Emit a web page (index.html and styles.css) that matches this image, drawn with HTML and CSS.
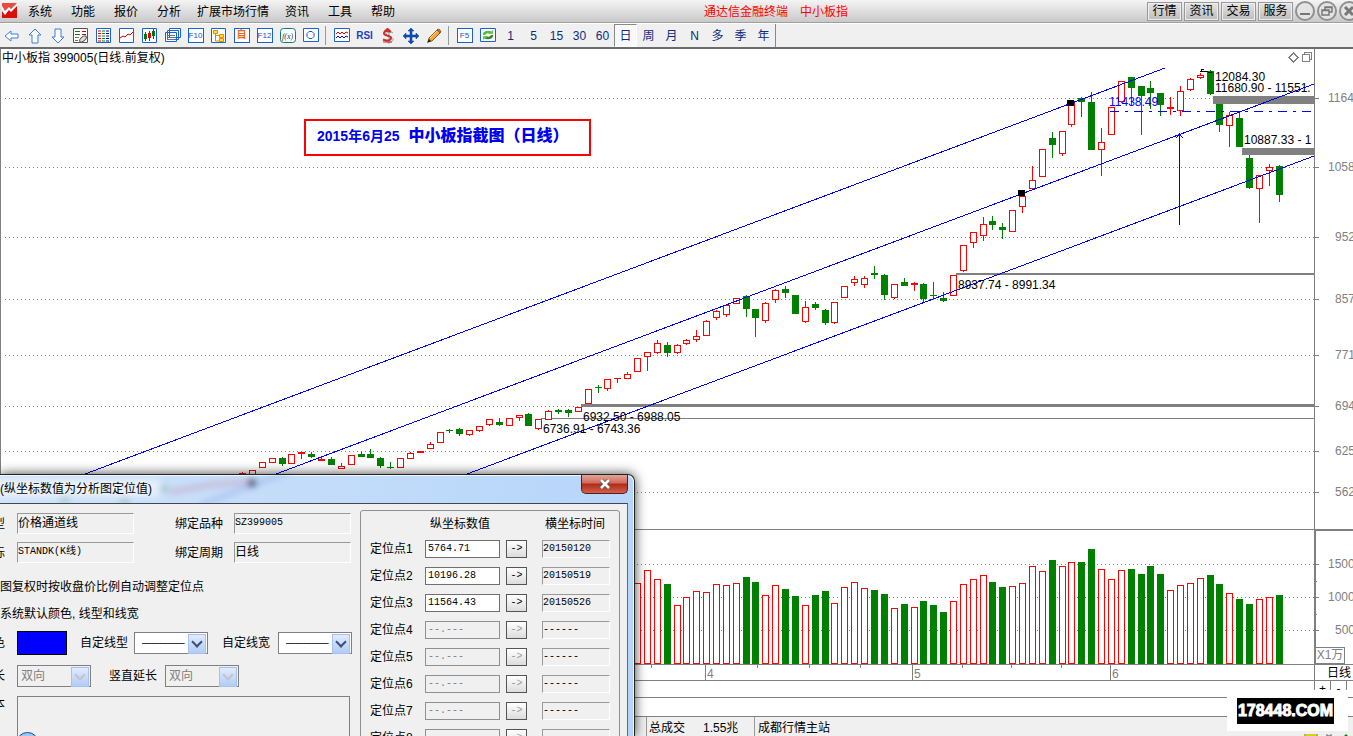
FILE: index.html
```html
<!DOCTYPE html>
<html lang="zh-CN">
<head>
<meta charset="utf-8">
<title>通达信金融终端 中小板指</title>
<link rel="stylesheet" href="styles.css">
</head>
<body>
<div class="app">
  <header class="menubar">
    <svg class="logo" viewBox="0 0 15 15"><rect width="15" height="15" fill="#d8100c"/><path d="M0 0h15L9 6 7 4 3 9 0 6z" fill="#e84a40"/><path d="M0 3l3 5 4-4 2 2 6-6v3l-6 6-2-2-4 5-3-4z" fill="#fff"/></svg>
    <nav class="menu">
      <button>系统</button><button>功能</button><button>报价</button><button>分析</button><button class="wide">扩展市场行情</button><button>资讯</button><button>工具</button><button>帮助</button>
    </nav>
    <div class="app-title"><span>通达信金融终端</span><span>中小板指</span></div>
    <div class="quick">
      <button>行情</button><button>资讯</button><button>交易</button><button>服务</button>
    </div>
    <div class="winctl">
      <button aria-label="最小化"><svg viewBox="0 0 20 20"><circle cx="10" cy="10" r="9"/><path d="M5 13h10" stroke-width="2"/></svg></button>
      <button aria-label="还原"><svg viewBox="0 0 20 20"><circle cx="10" cy="10" r="9"/><path d="M8 9V6h7v5h-3M5 9h7v5H5zM8 6.500h7M5 9.500h7" stroke-width="1.500"/></svg></button>
      <button aria-label="关闭"><svg viewBox="0 0 20 20"><circle cx="10" cy="10" r="9"/><path d="M6 6l8 8M14 6l-8 8" stroke-width="3"/></svg></button>
    </div>
  </header>

  <div class="toolbar">
    <button aria-label="后退"><svg viewBox="0 0 16 16"><path d="M1 8l6-5v3h7v4H7v3z" class="arrow"/></svg></button>
    <button aria-label="向上"><svg viewBox="0 0 16 16"><path d="M8 1l6 6h-3v8H5V7H2z" class="arrow"/></svg></button>
    <button aria-label="向下"><svg viewBox="0 0 16 16"><path d="M8 15l6-6h-3V1H5v8H2z" class="arrow"/></svg></button>
    <button aria-label="自选"><svg viewBox="0 0 16 16"><path d="M.5.500h14v14H.500z" fill="#fff" stroke="#555"/><path d="M2 3.500h5M2 6.500h5" stroke="#080"/><path d="M9 3.500h4M9 6.500h4" stroke="#c00"/><path d="M2 9.500h4M2 12.500h3" stroke="#777"/><ellipse cx="10" cy="11" rx="4" ry="2" transform="rotate(-40 10 11)" fill="#ddd" stroke="#555"/></svg></button>
    <button aria-label="行情列表"><svg viewBox="0 0 16 16"><path d="M.5.500h14v14H.500z" class="frame"/><path d="M2 3h3M2 5.500h3M2 8h3M2 10.500h3M2 13h3" stroke="#e00"/><path d="M6 3h3M6 5.500h3M6 8h3M6 10.500h3M6 13h3" stroke="#080"/><path d="M10 3h3M10 5.500h3M10 8h3M10 10.500h3M10 13h3" stroke="#00c"/></svg></button>
    <button aria-label="分时图"><svg viewBox="0 0 16 16"><path d="M.5.500h14v14H.500z" class="frame"/><path d="M1 10l3-2 2 1 3-3 2 1 3-3" fill="none" stroke="#d00"/></svg></button>
    <button aria-label="K线图"><svg viewBox="0 0 16 16"><path d="M.5.500h14v14H.500z" class="frame"/><path d="M2 6h3v5H2zM3 4h1v9H3z" fill="#070"/><path d="M6 5h3v5H6zM7 3h1v10H7z" fill="#d00"/><path d="M10 3h3v5h-3zM11 1h1v10h-1z" fill="#070"/></svg></button>
    <button aria-label="多窗口"><svg viewBox="0 0 16 16"><path d="M4.500.500h11v9h-11zM2.500 2.500h11v9h-11zM.5 4.500h11v9H.500z" class="frame"/><path d="M2 7.500h8M2 9.500h8M2 11.500h8" stroke="#678"/></svg></button>
    <button aria-label="F10"><span class="key">F10</span></button>
    <button aria-label="板块树"><svg viewBox="0 0 16 16"><path d="M.5.500h14v14H.500z" class="frame"/><path d="M4.500 5v8h4M4.500 7.500h4" fill="none" stroke="#e68a00"/><path d="M2.500 2.500h4v3h-4zM8.500 6.500h4v3h-4zM8.500 10.500h4v3h-4z" fill="#ffe14a" stroke="#e68a00"/></svg></button>
    <button aria-label="自选股"><span class="key orange">自</span></button>
    <button aria-label="F12"><span class="key">F12</span></button>
    <button aria-label="公式"><svg viewBox="0 0 16 16"><rect x=".5" y=".5" width="15" height="14" rx="3" fill="#fff" stroke="#0a7a7a"/><text x="2" y="11" class="fx">f(x)</text></svg></button>
    <button aria-label="圆形"><svg viewBox="0 0 16 16"><path d="M.5.500h15v13H.500z" class="frame"/><path d="M6 3.500h3l2 2v3l-2 2H6l-2-2v-3z" fill="none" stroke="#1457c8"/></svg></button>
    <i class="sep"></i>
    <button aria-label="多线"><svg viewBox="0 0 16 16"><path d="M.5.500h15v13H.500z" class="frame"/><path d="M2 6l2-2 2 2 2-2 2 2 2-2 2 1" fill="none" stroke="#d00"/><path d="M2 10l2-2 2 2 2-2 2 2 2-2 2 1" fill="none" stroke="#00c"/></svg></button>
    <button class="rsi">RSI</button>
    <button aria-label="资金"><svg viewBox="0 0 16 16"><path d="M12 4C9 2 5 3 5 5.500S12 7 12 10.500 6 13.500 4 12M8 0v15" fill="none" stroke="#999" transform="translate(1 1)"/><path d="M11 4C8 2 4 3 4 5.500S11 7 11 10 6 13 3 11.500" fill="none" stroke="#c8302c" stroke-width="2"/><path d="M7.500 0l3 3h-6zM3 14h9" fill="#c8302c" stroke="#c8302c"/></svg></button>
    <button aria-label="移动"><svg viewBox="0 0 16 16"><path d="M8 0l3 3H9v4h4V5l3 3-3 3V9H9v4h2l-3 3-3-3h2V9H3v2L0 8l3-3v2h4V3H5z" fill="#0b4fc0" stroke="#063a8c" stroke-width=".5"/></svg></button>
    <button aria-label="画线"><svg viewBox="0 0 16 16"><path d="M2 14l1-4 8-8 3 3-8 8z" fill="#f3a63a" stroke="#8a5a1c"/><path d="M11 2l1-1q2 0 3 3l-1 1z" fill="#d86a5a" stroke="#8a5a1c"/><path d="M4 10l7-7" stroke="#ffe29a"/><path d="M1 15l2-4 2 2z" fill="#222"/></svg></button>
    <i class="sep"></i>
    <button aria-label="F5"><span class="key">F5</span></button>
    <button aria-label="刷新"><svg viewBox="0 0 16 16"><path d="M.5.500h15v13H.500z" class="frame"/><path d="M4 7a4 3 0 0 1 7-2" fill="none" stroke="#58b838" stroke-width="2.500"/><path d="M12 7a4 3 0 0 1-7 2" fill="none" stroke="#358a28" stroke-width="2.500"/><path d="M8 6h5V2zM3 12V8h5z" fill="#6ac84a"/></svg></button>
    <button>1</button><button>5</button><button>15</button><button>30</button><button>60</button>
    <button class="pressed" aria-pressed="true">日</button>
    <button>周</button><button>月</button><button>N</button><button>多</button><button>季</button><button>年</button>
    <i class="end"></i>
  </div>

  <main class="board">
    <div class="pane price">
      <svg class="plot" id="price" role="img" aria-label="日线图"></svg>
      <h1 class="pane-title">中小板指 399005(日线.前复权)</h1>
      <p class="note"><span>2015年6月25</span><b>中小板指截图（日线）</b></p>
    </div>
    <svg class="scale" id="price-scale"></svg>
    <svg class="plot volume" id="volume" role="img" aria-label="成交量"></svg>
    <div class="scale-box"><svg class="scale" id="volume-scale"></svg><span class="unit">X1万</span></div>
    <svg class="plot dates" id="dates"></svg>
    <div class="period">日线</div>
    <div class="strip"></div><div class="strip zoomers"><button>+</button><button>-</button></div>
  </main>
  <div class="ticker"></div>

  <footer class="status">
    <div class="turnover"><span>总成交</span><span>1.55兆</span></div>
    <div class="server">成都行情主站</div>
    <svg class="tray" viewBox="0 0 50 6"><circle cx="8" cy="-2" r="7" fill="#d8d020" stroke="#8a8a10"/><path d="M23 5.500h6V2h-6zM24 0v2h4V0" fill="none" stroke="#777"/><path d="M38 5l5-5 5 5z" fill="#080"/></svg>
  </footer>

  <div class="watermark"><span>178448.COM</span></div>

  <section class="dialog" aria-label="画线属性">
    <div class="titlebar">
      <svg class="smudge" viewBox="0 0 360 28"><defs><filter id="soft" x="-10%" y="-50%" width="120%" height="200%"><feGaussianBlur stdDeviation="3"/></filter></defs><g filter="url(#soft)" fill="none"><path d="M-20 13h180" stroke="#fff" stroke-width="18" opacity=".5"/><path d="M170 17l40-7 40-3" stroke="#c58fae" stroke-width="5" opacity=".45"/><path d="M60 24h10M120 26h10M160 14h8" stroke="#5a9a88" stroke-width="5" opacity=".5"/><path d="M200 30l90-34" stroke="#7d9fe0" stroke-width="5" opacity=".4"/><path d="M248 8h8" stroke="#334" stroke-width="7" opacity=".8"/></g></svg>
      <h2>(纵坐标数值为分析图定位值)</h2>
      <button class="close" aria-label="关闭"><svg viewBox="0 0 12 10"><path d="M2 1l8 8M10 1L2 9" stroke="#555" stroke-width="4"/><path d="M2 1l8 8M10 1L2 9" stroke="#fff" stroke-width="2.500"/></svg></button>
    </div>
    <div class="client">
      <form class="props">
        <div class="line"><span class="cut">型</span><output class="sunk">价格通道线</output><span class="lab far">绑定品种</span><output class="sunk mono">SZ399005</output></div>
        <div class="line second"><span class="cut">标</span><output class="sunk mono">STANDK(K线)</output><span class="lab far">绑定周期</span><output class="sunk">日线</output></div>
        <p class="opt first">图复权时按收盘价比例自动调整定位点</p>
        <p class="opt">系统默认颜色, 线型和线宽</p>
        <div class="line colors"><span class="cut">色</span><button type="button" class="swatch" aria-label="颜色"></button><label for="style">自定线型</label><span class="combo"><select id="style"><option>─────</option></select></span><label for="thick">自定线宽</label><span class="combo"><select id="thick"><option>─────</option></select></span></div>
        <div class="line extend"><span class="cut">长</span><span class="combo off"><select aria-label="延长" disabled><option>双向</option></select></span><label for="vert">竖直延长</label><span class="combo off"><select id="vert" disabled><option>双向</option></select></span></div>
        <div class="line memo"><span class="cut">本</span><textarea aria-label="文本" disabled></textarea></div>
        <i class="orb"></i>
      </form>
      <form class="points">
        <div class="prow head"><span></span><span class="h1">纵坐标数值</span><span></span><span>横坐标时间</span></div>
        <div class="prow"><label for="p1">定位点1</label><input id="p1" value="5764.71"><button type="button">-&gt;</button><output class="sunk mono">20150120</output></div>
        <div class="prow"><label for="p2">定位点2</label><input id="p2" value="10196.28"><button type="button">-&gt;</button><output class="sunk mono">20150519</output></div>
        <div class="prow"><label for="p3">定位点3</label><input id="p3" value="11564.43"><button type="button">-&gt;</button><output class="sunk mono">20150526</output></div>
        <div class="prow"><label for="p4">定位点4</label><input id="p4" value="--.---" disabled><button type="button" disabled>-&gt;</button><output class="sunk mono">------</output></div>
        <div class="prow"><label for="p5">定位点5</label><input id="p5" value="--.---" disabled><button type="button" disabled>-&gt;</button><output class="sunk mono">------</output></div>
        <div class="prow"><label for="p6">定位点6</label><input id="p6" value="--.---" disabled><button type="button" disabled>-&gt;</button><output class="sunk mono">------</output></div>
        <div class="prow"><label for="p7">定位点7</label><input id="p7" value="--.---" disabled><button type="button" disabled>-&gt;</button><output class="sunk mono">------</output></div>
        <div class="prow"><label for="p8">定位点8</label><input id="p8" disabled><button type="button" disabled>-&gt;</button><output class="sunk mono"></output></div>
      </form>
    </div>
  </section>
</div>
<script src="chart.js"></script>
</body>
</html>
```
FILE: styles.css
```css
* { box-sizing: border-box; }
body {
  margin: 0;
  height: 100vh;
  overflow: hidden;
  background: #fff;
  color: #000;
  font: 12px/16px "Liberation Sans", "Noto Sans CJK SC", sans-serif;
}
button, input, select, textarea { font: inherit; color: inherit; margin: 0; padding: 0; border-radius: 0; }
h1, h2, p { margin: 0; font-size: 12px; font-weight: normal; }
.app { position: relative; height: 100%; display: flex; flex-direction: column; overflow: hidden; }

.menubar {
  flex: none;
  height: 23px;
  display: flex;
  align-items: center;
  overflow: hidden;
  border-bottom: 1px solid #a0a0a0;
  background: linear-gradient(#f4f4f4, #c9c9c9);
}
.logo { flex: none; width: 15px; height: 15px; margin: 0 13px 2px 2px; }
.menu { flex: none; display: flex; gap: 19px; margin-left: -2px; padding-top: 2px; }
.menu button { border: 0; background: none; white-space: nowrap; }
.menu .wide { margin: 0 -3px; }
.app-title { display: flex; gap: 12px; margin: 0 auto; padding: 2px 0 0 10px; color: #f00; white-space: nowrap; }
.quick { flex: none; display: flex; gap: 2px; }
.quick button { width: 35px; height: 19px; border: 1px solid #999; outline: 1px solid #eee; outline-offset: -2px; background: linear-gradient(#e4e4e4, #bcbcbc); line-height: 17px; }
.winctl { flex: none; display: flex; gap: 2px; width: 58px; margin-left: 2px; overflow: hidden; }
.winctl button { flex: none; width: 20px; height: 20px; border: 0; background: none; }
.winctl svg { display: block; width: 20px; height: 20px; fill: none; stroke: #777; }
.winctl circle { fill: #e4e4e4; stroke: #909090; stroke-width: 2; }

.toolbar {
  flex: none;
  height: 26px;
  display: flex;
  border-top: 1px solid #fff;
  border-bottom: 2px solid #6c6c6c;
  background: #f0f0f0;
  color: #0a2c80;
}
.toolbar button { flex: none; width: 23px; display: flex; align-items: center; justify-content: center; border: 0; background: none; }
.toolbar svg { width: 16px; height: 16px; overflow: visible; }
.toolbar .arrow { fill: #fff; stroke: #3f7de0; }
.toolbar .frame { fill: #fff; stroke: #1763d2; }
.toolbar .pressed { border: 1px solid #888; border-right-color: #fff; border-bottom-color: #fff; background: #f9f9f9; }
.key { width: 16px; height: 15px; border: 1px solid #1763d2; background: #fff; color: #1f50d0; font-size: 8px; line-height: 14px; display: flex; justify-content: center; }
.key.orange { color: #f06a20; font-weight: bold; font-size: 10px; line-height: 12px; }
.fx { font: italic 8px "Liberation Serif", serif; fill: #045; }
.toolbar .rsi { color: #2440c8; font-weight: bold; font-size: 10px; }
.sep { flex: none; width: 8px; border: solid #f0f0f0; border-width: 2px 3px; border-right-width: 4px; background: #999; }
.end { width: 1px; background: #888; }

.board { flex: none; display: grid; grid-template-columns: minmax(0, 1fr) 39px; }
.pane { position: relative; border-left: 1px solid #808080; }
.plot, .scale { display: block; width: 100%; overflow: hidden; }
#price, #price-scale { height: 480px; }
#price { margin-left: -1px; width: calc(100% + 1px); }
.volume, #volume-scale { height: 136px; }
.dates { height: 16px; border-bottom: 1px solid #808080; }
.plot text, .scale text { font: 12px "Liberation Sans", sans-serif; }
.scale text, .dates text { fill: #808080; }
.pane-title { position: absolute; left: 1px; top: 1px; }
.note {
  position: absolute;
  left: 303px;
  top: 70px;
  height: 37px;
  width: 287px;
  padding: 0 0 4px 11px;
  display: flex;
  gap: 9px;
  align-items: center;
  border: 2px solid #f00;
  background: #fff;
  color: #0000f0;
  font: bold 14px/24px "Liberation Sans", "Noto Sans CJK SC", sans-serif;
  white-space: nowrap;
}
.note b { font-size: 16px; }
.scale-box { position: relative; }
.unit { position: absolute; left: 1px; bottom: 1px; width: 30px; border: 1px solid #808080; color: #808080; background: #fff; text-align: center; line-height: 15px; }
.period { border-left: 1px solid #808080; border-bottom: 1px solid #808080; padding-left: 12px; white-space: nowrap; line-height: 17px; height: 16px; }
.strip { height: 17px; border-bottom: 1px solid #808080; }
.zoomers { display: flex; align-items: start; overflow: hidden; }
.zoomers button { width: 16px; height: 16px; border: 0; border-left: 1px solid #808080; background: none; line-height: 12px; }
.zoomers button:last-child { width: 17px; border-right: 1px solid #808080; }
.ticker { flex: none; height: 19px; border-bottom: 1px solid #808080; }

.status { flex: 1; display: flex; align-items: flex-start; background: #f0f0f0; line-height: 23px; white-space: nowrap; }
.turnover { display: flex; gap: 18px; width: 108px; margin-left: 646px; padding-left: 2px; border-left: 1px solid #999; }
.server { padding-left: 3px; border-left: 1px solid #999; }
.tray { width: 50px; height: 6px; margin: auto 0 0 auto; }

.watermark { position: absolute; right: 5px; bottom: 5px; width: 121px; height: 41px; padding-right: 4px; display: flex; justify-content: center; align-items: center; background: #fff; }
.watermark span { height: 26px; padding: 0 1px; background: #000; color: #fff; font: bold 16px/26px "Liberation Sans", sans-serif; -webkit-text-stroke: 1px #fff; }

.dialog {
  position: absolute;
  left: 0;
  top: 474px;
  bottom: 0;
  width: 635px;
  display: flex;
  flex-direction: column;
  border-top: 1px solid #222;
  border-right: 1px solid #222;
  border-radius: 0 7px 0 0;
  background: linear-gradient(100deg, #cfe2f8, #b5d5fb);
  box-shadow: 0 0 12px rgba(0, 0, 0, .75), inset -1px 1px 0 #f2f8ff;
}
.titlebar { position: relative; flex: none; height: 28px; display: flex; align-items: center; justify-content: space-between; padding-right: 6px; }
.titlebar h2 { position: relative; text-shadow: 0 0 5px #fff; }
.smudge { position: absolute; left: 0; top: 0; width: 360px; height: 28px; }
.close { position: relative; align-self: flex-start; width: 47px; height: 19px; border: 1px solid #5a1c18; border-top: 0; border-radius: 0 0 5px 5px; background: linear-gradient(#e2a498, #cf6a58 45%, #b02a18 50%, #d0614a); }
.close svg { display: block; width: 12px; height: 10px; margin: 0 auto; }
.client { flex: 1; min-height: 0; display: flex; margin-right: 6px; overflow: hidden; border-top: 1px solid #445; border-right: 1px solid #667; background: #f0f0f0; }
.props { position: relative; width: 360px; flex: none; padding-top: 9px; }
.line { display: flex; align-items: center; }
.cut { flex: none; width: 5px; margin-right: 12px; overflow: hidden; display: flex; justify-content: flex-end; }
.sunk { display: block; width: 117px; height: 21px; border: 1px solid #fff; border-top-color: #999; border-left-color: #999; line-height: 18px; white-space: nowrap; overflow: hidden; }
.mono, .points input, .points .prow button { font-family: "Liberation Mono", "Noto Sans CJK SC", monospace; font-size: 10px; }
.lab.far { width: 59px; margin-left: 41px; }
.second { margin-top: 8px; }
.opt { line-height: 16px; margin-top: 11px; white-space: nowrap; }
.opt.first { margin-top: 16px; }
.colors { margin-top: 9px; }
.swatch { width: 50px; height: 24px; border: 1px solid #000; background: #00f; margin-right: 13px; }
.colors label { width: 54px; }
.colors .combo + label { margin-left: 14px; width: 56px; }
.extend label { width: 56px; margin-left: 18px; }
.combo { position: relative; width: 74px; height: 22px; display: block; }
.combo select { appearance: none; width: 100%; height: 100%; padding: 0 18px 0 7px; border: 1px solid #808080; background: #fff; line-height: 20px; }
.combo.off select { padding-left: 3px; background: #f0f0f0; color: #808080; opacity: 1; }
.combo::after { content: ""; position: absolute; right: 2px; top: 2px; width: 16px; height: 18px; border: 1px solid #a8c0f0; background: linear-gradient(#e0ebff, #b0ccf8); pointer-events: none; }
.combo::before { content: ""; position: absolute; z-index: 1; right: 7px; top: 6px; width: 6px; height: 6px; border: solid #3a4f78; border-width: 0 2px 2px 0; transform: rotate(45deg); pointer-events: none; }
.combo.off::before { border-color: #c4c4c4; }
.extend { margin-top: 10px; }
.memo { margin-top: 9px; align-items: flex-start; }
.memo textarea { width: 333px; height: 60px; resize: none; border: 1px solid #808080; background: #f0f0f0; }
.orb { position: absolute; left: 16px; bottom: -19px; width: 23px; height: 23px; border: 1px solid #1c4890; border-radius: 50%; background: #9cc8f4; }
.points { flex: none; width: 260px; height: 300px; margin-top: 6px; border: 1px solid #909090; border-radius: 3px; }
.prow { display: grid; grid-template-columns: 49px 75px 21px 68px; column-gap: 6px; align-items: center; height: 27px; padding-left: 9px; }
.prow > :last-child { margin-left: 9px; }
.prow .sunk { width: 68px; height: 18px; line-height: 16px; }
.prow.head { height: 24px; padding-top: 2px; white-space: nowrap; }
.prow .h1 { padding-left: 5px; }
.prow.head > :last-child { padding-left: 3px; }
.points input { width: 75px; height: 18px; padding: 0 2px; border: 1px solid #707070; background: #fff; }
.points input:disabled { background: #f0f0f0; color: #808080; border-color: #909090; }
.prow button { width: 21px; height: 18px; border: 1px solid #555; background: linear-gradient(#fff, #dcdcdc); line-height: 14px; }
.prow button:disabled { color: #999; }
```
FILE: chart.js
```js
const RED = '#f00', GREEN = '#008000', GRAY = '#808080', BLUE = '#00f';

// kind, centre x, high, low, body top, body bottom, volume top
const days = [
  ['r',242,472,474,473,474],['r',252,470,475,470,475],['r',262,462,467,462,467],['r',272,458,462,458,462],['g',282,457,465,458,463],
  ['r',291,454,463,454,463],['r',301,452,458,452,453],['g',311,452,457,454,456],['r',321,457,460,459,460],
  ['g',331,457,464,459,464],['r',341,463,468,466,468],['r',351,455,464,455,464],['g',361,452,456,454,456],
  ['g',370,449,457,454,457],['g',380,457,467,458,465],['g',390,462,468,467,467],['r',400,458,467,458,467],
  ['r',410,452,458,453,458],['r',420,451,452,451,452],['r',430,442,448,444,448],['r',440,432,442,432,442],
  ['g',449,429,432,430,430],['g',459,428,435,429,433],['r',469,430,435,430,434],['r',479,426,431,426,430],
  ['r',489,419,425,419,424],['g',499,418,425,422,424],['r',509,418,425,418,425],['r',519,415,420,415,417],
  ['g',528,413,425,414,425],['r',538,419,429,419,428],['r',548,410,419,411,419],['g',558,409,413,410,411],
  ['g',568,409,416,410,412],['r',578,407,411,407,411],['r',588,389,403,389,403],['g',598,385,392,387,387],
  ['r',607,379,390,379,388],['r',617,378,382,378,378],['r',627,372,378,374,378],['r',637,358,371,358,371,583],
  ['r',647,352,370,352,356,570],['r',657,340,353,343,352,579],['g',667,342,356,345,352,584],['r',677,344,353,345,352,605],
  ['r',686,339,344,340,343,597],['r',696,330,341,336,339,591],['r',706,320,335,321,335,592],['r',716,310,319,311,317,584],
  ['r',726,304,316,305,314,585],['r',736,298,303,298,303,583],['g',746,295,316,296,308,577],['g',755,309,336,309,317,582],
  ['r',765,302,322,303,320,595],['r',775,289,302,290,299,585],['g',785,286,297,289,292,589],['g',795,295,313,295,313,596],
  ['r',805,301,322,307,321,605],['g',815,302,309,304,307,595],['g',825,309,324,310,322,591],['r',834,302,323,302,322,603],
  ['r',844,286,297,286,297,587],['r',854,276,285,279,282,582],['r',864,276,287,278,284,588],['g',874,266,278,273,274,590],
  ['g',884,274,299,275,294,594],['r',894,284,298,284,297,608],['g',904,278,285,282,285,604],['r',914,282,290,283,284,607],
  ['g',923,283,301,284,298,601],['g',933,282,298,295,295,605],['g',943,292,301,298,300,612],['r',953,275,295,275,295,601],
  ['r',963,245,271,245,270,584],['r',973,232,247,232,242,579],['r',983,217,240,224,235,575],['g',992,216,229,221,224,582],
  ['g',1002,223,238,227,229,587],['r',1012,210,231,210,231,586],['r',1022,196,212,196,206,583],['r',1032,166,188,180,188,566],
  ['r',1042,149,176,149,176,571],['g',1052,132,157,138,144,560],['r',1062,131,155,131,153,566],['r',1071,103,126,103,124,562],
  ['g',1081,97,116,98,101,562],['g',1091,92,149,102,149,549],['r',1101,128,175,142,149,569],['r',1111,107,134,107,134,579],
  ['r',1121,81,102,81,101,570],['g',1131,77,104,77,87,569],['g',1141,86,134,86,95,574],['g',1150,81,108,88,92,566],
  ['g',1160,93,115,93,104,574],['r',1170,97,114,107,108,590],['r',1180,86,115,91,110,585],['r',1190,78,90,79,89,583],
  ['r',1200,73,78,75,77,578],['g',1210,70,94,71,93,575],['g',1219,104,131,104,124,584],['r',1229,112,146,115,125,593],
  ['g',1239,113,146,118,146,599],['g',1249,155,188,158,187,604],['r',1259,175,222,175,188,599],['r',1269,164,185,167,170,597],
  ['g',1279,165,201,166,194,595]
];

const line = (x1, y1, x2, y2, color, extra = '') =>
  `<line x1="${x1}" y1="${y1}" x2="${x2}" y2="${y2}" stroke="${color}" ${extra}/>`;
const rect = (x, y, w, h, fill, stroke = 'none') =>
  `<rect x="${x}" y="${y}" width="${w}" height="${h}" fill="${fill}" stroke="${stroke}"/>`;
const text = (x, y, s, color = '#000') => `<text x="${x}" y="${y}" fill="${color}">${s}</text>`;
const dotted = y => line(5, y + .5, '100%', y + .5, GRAY, 'stroke-dasharray="1 3"');

function body(kind, x, top, bottom) {
  return kind === 'g' || bottom - top < 2
    ? rect(x - 3, top, 7, bottom - top + 1, kind === 'g' ? GREEN : RED)
    : rect(x - 2.5, top + .5, 6, bottom - top, '#fff', RED);
}
function mount(id, top, content) {
  document.getElementById(id).innerHTML =
    `<g transform="translate(0,${-top})" shape-rendering="crispEdges">${content}</g>`;
}

const gridPrices = [[98,'1164'],[167,'1058'],[237,'952'],[299,'857'],[355,'771'],[406,'694'],[451,'625'],[492,'562']];
const gridVolumes = [[564,'1500'],[597,'1000'],[630,'500']];

let p = gridPrices.map(g => dotted(g[0])).join('');
for (const [x, y, h] of [[1213,96,8],[1242,148,7],[956,273,2],[581,404,3],[541,418,1]]) p += rect(x, y, '100%', h, GRAY);
for (const [k, x, hi, lo, top, bot] of days) {
  p += rect(x, hi, 1, lo - hi + 1, k === 'g' ? GREEN : RED) + body(k, x, top, bot);
}
p += line(85, 474, 1165, 68, BLUE) + line(276, 474, 1314, 84, BLUE) + line(467, 474, 1314, 156, BLUE);
p += line(1110, 111.5, '100%', 111.5, BLUE, 'stroke-dasharray="9 6 3 6"');
p += line(1179.5, 134, 1179.5, 225, BLUE) + `<path d="M1176 138l3.500-4 3.500 4" fill="none" stroke="${BLUE}"/>`;
p += rect(1067, 100, 7, 6, '#000') + rect(1018, 190, 7, 6, '#000');
p += '<path d="M1204 69h-3v3M1200 71h4l8 2" fill="none" stroke="#000"/>';
p += text(1215, 81, '12084.30') + text(1215, 92, '11680.90 - 11551.') + text(1244, 144, '10887.33 - 1');
p += text(958, 289, '8937.74 - 8991.34') + text(583, 421, '6932.50 - 6988.05') + text(543, 433, '6736.91 - 6743.36');
p += text(1109, 106, '11438.49', BLUE);
p += `<path d="M1293.500 53l4.500 4.500-4.500 4.500-4.500-4.500zM1304.500 54.500v-2h7v7h-2M1302.500 54.500h7v7h-7z" fill="none" stroke="${GRAY}"/>`;
mount('price', 49, p);

let s = line(.5, 49, .5, 529, GRAY);
for (const [y, t] of gridPrices) s += line(0, y + .5, 5, y + .5, GRAY) + text(t.length > 3 ? 14 : 21, y + 4, t, GRAY);
mount('price-scale', 49, s);

let v = line(0, 529.5, '100%', 529.5, GRAY) + gridVolumes.map(g => dotted(g[0])).join('') + line(0, 664.5, '100%', 664.5, GRAY);
for (const [k, x, , , , , top] of days) if (top) v += body(k, x, top, 663);
mount('volume', 529, v);

let w = line(0, 530, 39, 530, GRAY, 'stroke-width="2"') + line(1, 530, 1, 665, GRAY, 'stroke-width="2"') + line(0, 664.5, 39, 664.5, GRAY);
for (const [y, t] of gridVolumes) w += line(0, y + .5, 5, y + .5, GRAY) + text(t.length > 3 ? 14 : 21, y + 4, t, GRAY);
w += line(0, 581.5, 3, 581.5, GRAY) + line(0, 614.5, 3, 614.5, GRAY);
mount('volume-scale', 529, w);

let d = '';
for (const x of [651, 757, 809, 860, 962, 1011, 1061]) d += line(x + .5, 665, x + .5, 668, GRAY);
for (const [x, m] of [[705, '4'], [912, '5'], [1110, '6']]) d += line(x + .5, 665, x + .5, 681, GRAY) + text(x + 2, 678, m, GRAY);
mount('dates', 665, d);
```
